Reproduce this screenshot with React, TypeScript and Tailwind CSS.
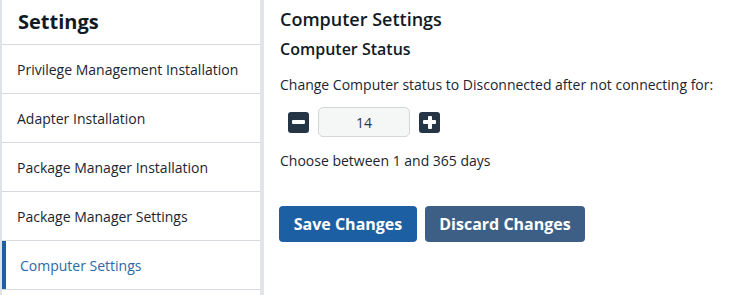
import React from "react";

const items = [
  "Privilege Management Installation",
  "Adapter Installation",
  "Package Manager Installation",
  "Package Manager Settings",
];

export default function App() {
  return (
    <div
      className="flex w-[729px] h-[295px] overflow-hidden bg-white text-[#1b2530]"
      style={{ fontFamily: '"Open Sans", "Noto Sans", sans-serif' }}
    >
      <aside className="w-[264px] shrink-0 border-l-2 border-l-[#dfe3e8] border-r-4 border-r-[#e1e5ea] flex flex-col">
        <div className="h-[45px] flex items-center pl-[16px] text-[20px] font-bold text-[#111a24] border-b border-[#d6d9dd]">
          Settings
        </div>
        {items.map((t) => (
          <div
            key={t}
            className="h-[49px] flex items-center pl-[15px] text-[14px] border-b border-[#d6d9dd] text-[#1b2530]"
          >
            {t}
          </div>
        ))}
        <div className="h-[49px] flex items-center border-b border-[#d6d9dd]">
          <div className="w-[4px] h-full bg-[#1d5fa3]" />
          <span className="pl-[14px] text-[14px] text-[#2a6aa8]">Computer Settings</span>
        </div>
      </aside>
      <main className="flex-1 pl-[16px] pt-[7px]">
        <h1 className="text-[18px] font-semibold leading-[24px] text-[#111a24]">Computer Settings</h1>
        <h2 className="mt-[7px] text-[16px] font-semibold leading-[22px] text-[#111a24]">Computer Status</h2>
        <p className="mt-[15px] text-[14px] leading-[20px]">
          Change Computer status to Disconnected after not connecting for:
        </p>
        <div className="mt-[12px] flex items-center pl-[8px] gap-[9px]">
          <button className="w-[21px] h-[21px] rounded-[3px] bg-[#253545] flex items-center justify-center">
            <span className="block w-[13px] h-[4px] rounded-[1px] bg-white" />
          </button>
          <div className="w-[92px] h-[30px] rounded-[5px] border border-[#d3d7da] bg-[#f5f7f7] flex items-center justify-center text-[14px] text-[#2b3845]">
            14
          </div>
          <button className="relative w-[21px] h-[21px] rounded-[3px] bg-[#253545] flex items-center justify-center">
            <span className="absolute w-[13px] h-[4px] rounded-[1px] bg-white" />
            <span className="absolute w-[4px] h-[13px] rounded-[1px] bg-white" />
          </button>
        </div>
        <p className="mt-[14px] text-[14px] leading-[20px]">Choose between 1 and 365 days</p>
        <div className="mt-[35px] flex gap-[8px] -ml-[1px]">
          <button className="h-[36px] w-[138px] rounded-[4px] bg-[#1d5fa3] text-white text-[16px] font-bold">
            Save Changes
          </button>
          <button className="h-[36px] w-[160px] rounded-[4px] bg-[#3e5f85] text-white text-[16px] font-bold">
            Discard Changes
          </button>
        </div>
      </main>
    </div>
  );
}
